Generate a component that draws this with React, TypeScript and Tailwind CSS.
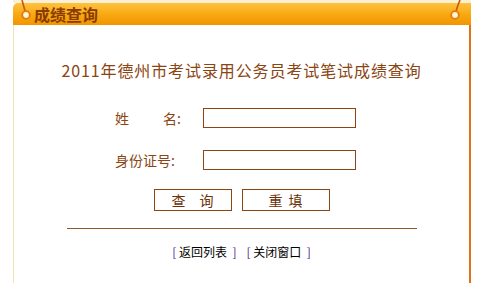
import React from "react";

function Hook({ side }: { side: "left" | "right" }) {
  // small ring with a cord going up over the header bar
  const left = side === "left";
  return (
    <svg
      className={`absolute top-[-3px] ${left ? "left-[7px]" : "right-[9px]"}`}
      width="14"
      height="22"
      viewBox="0 0 14 22"
    >
      {left ? (
        <path d="M6 15 Q4 7 2 0" stroke="#c8590a" strokeWidth="1.6" fill="none" />
      ) : (
        <path d="M7 15 Q9 7 12 0" stroke="#c8590a" strokeWidth="1.6" fill="none" />
      )}
      <circle cx={left ? 6 : 7} cy="15" r="3.8" fill="#fff5cf" stroke="#e27a10" strokeWidth="1.8" />
    </svg>
  );
}

export default function App() {
  return (
    <div
      className="w-[489px] h-[291px] bg-white pl-[13px] overflow-hidden"
      style={{ fontFamily: '"Noto Sans CJK SC", "Noto Sans", sans-serif' }}
    >
      <div className="w-[458px] h-[3px] bg-[#fbf0d6]" />
      <div className="relative w-[458px] h-[22px] rounded-tl-[5px] bg-gradient-to-b from-[#fdc33c] via-[#f9a912] to-[#f19500] flex items-center">
        <Hook side="left" />
        <Hook side="right" />
        <span className="ml-[21px] text-[16px] leading-none font-bold text-[#8a3c00]">成绩查询</span>
      </div>
      <div className="w-[458px] h-[258px] border-l border-l-[#f3e4b5] border-r-2 border-r-[#e0731a] flex flex-col items-center">
        <h1 className="mt-[33px] text-[16px] leading-[24px] tracking-[0.9px] text-[#8b4513]">
          2011年德州市考试录用公务员考试笔试成绩查询
        </h1>

        <div className="mt-[26px] ml-[-12px] flex flex-col gap-[22px] text-[14px] leading-[20px] text-[#8b4513]">
          <div className="flex items-center h-[20px]">
            <span className="w-[88px] flex justify-between pr-[22px]">
              <span>姓</span>
              <span>名:</span>
            </span>
            <input className="w-[153px] h-[20px] border border-[#8b4513] bg-white outline-none" />
          </div>
          <div className="flex items-center h-[20px]">
            <span className="w-[88px]">身份证号:</span>
            <input className="w-[153px] h-[20px] border border-[#8b4513] bg-white outline-none" />
          </div>
        </div>

        <div className="mt-[19px] flex gap-[10px] text-[14px] text-[#6b3208]">
          <button className="w-[78px] h-[22px] border border-[#8b4513] bg-white leading-none tracking-[14px] pl-[14px]">
            查询
          </button>
          <button className="w-[88px] h-[22px] border border-[#8b4513] bg-white leading-none tracking-[6px] pl-[6px]">
            重填
          </button>
        </div>

        <div className="mt-[17px] w-[350px] h-px bg-[#8b5a2b]" />

        <div className="mt-[17px] text-[12px] leading-none text-black flex gap-[10px]">
          <span>
            <span className="text-[#551a8b]">[ </span>返回列表<span className="text-[#551a8b]">&nbsp; ]</span>
          </span>
          <span>
            <span className="text-[#551a8b]">[ </span>关闭窗口<span className="text-[#551a8b]">&nbsp; ]</span>
          </span>
        </div>
      </div>
    </div>
  );
}
